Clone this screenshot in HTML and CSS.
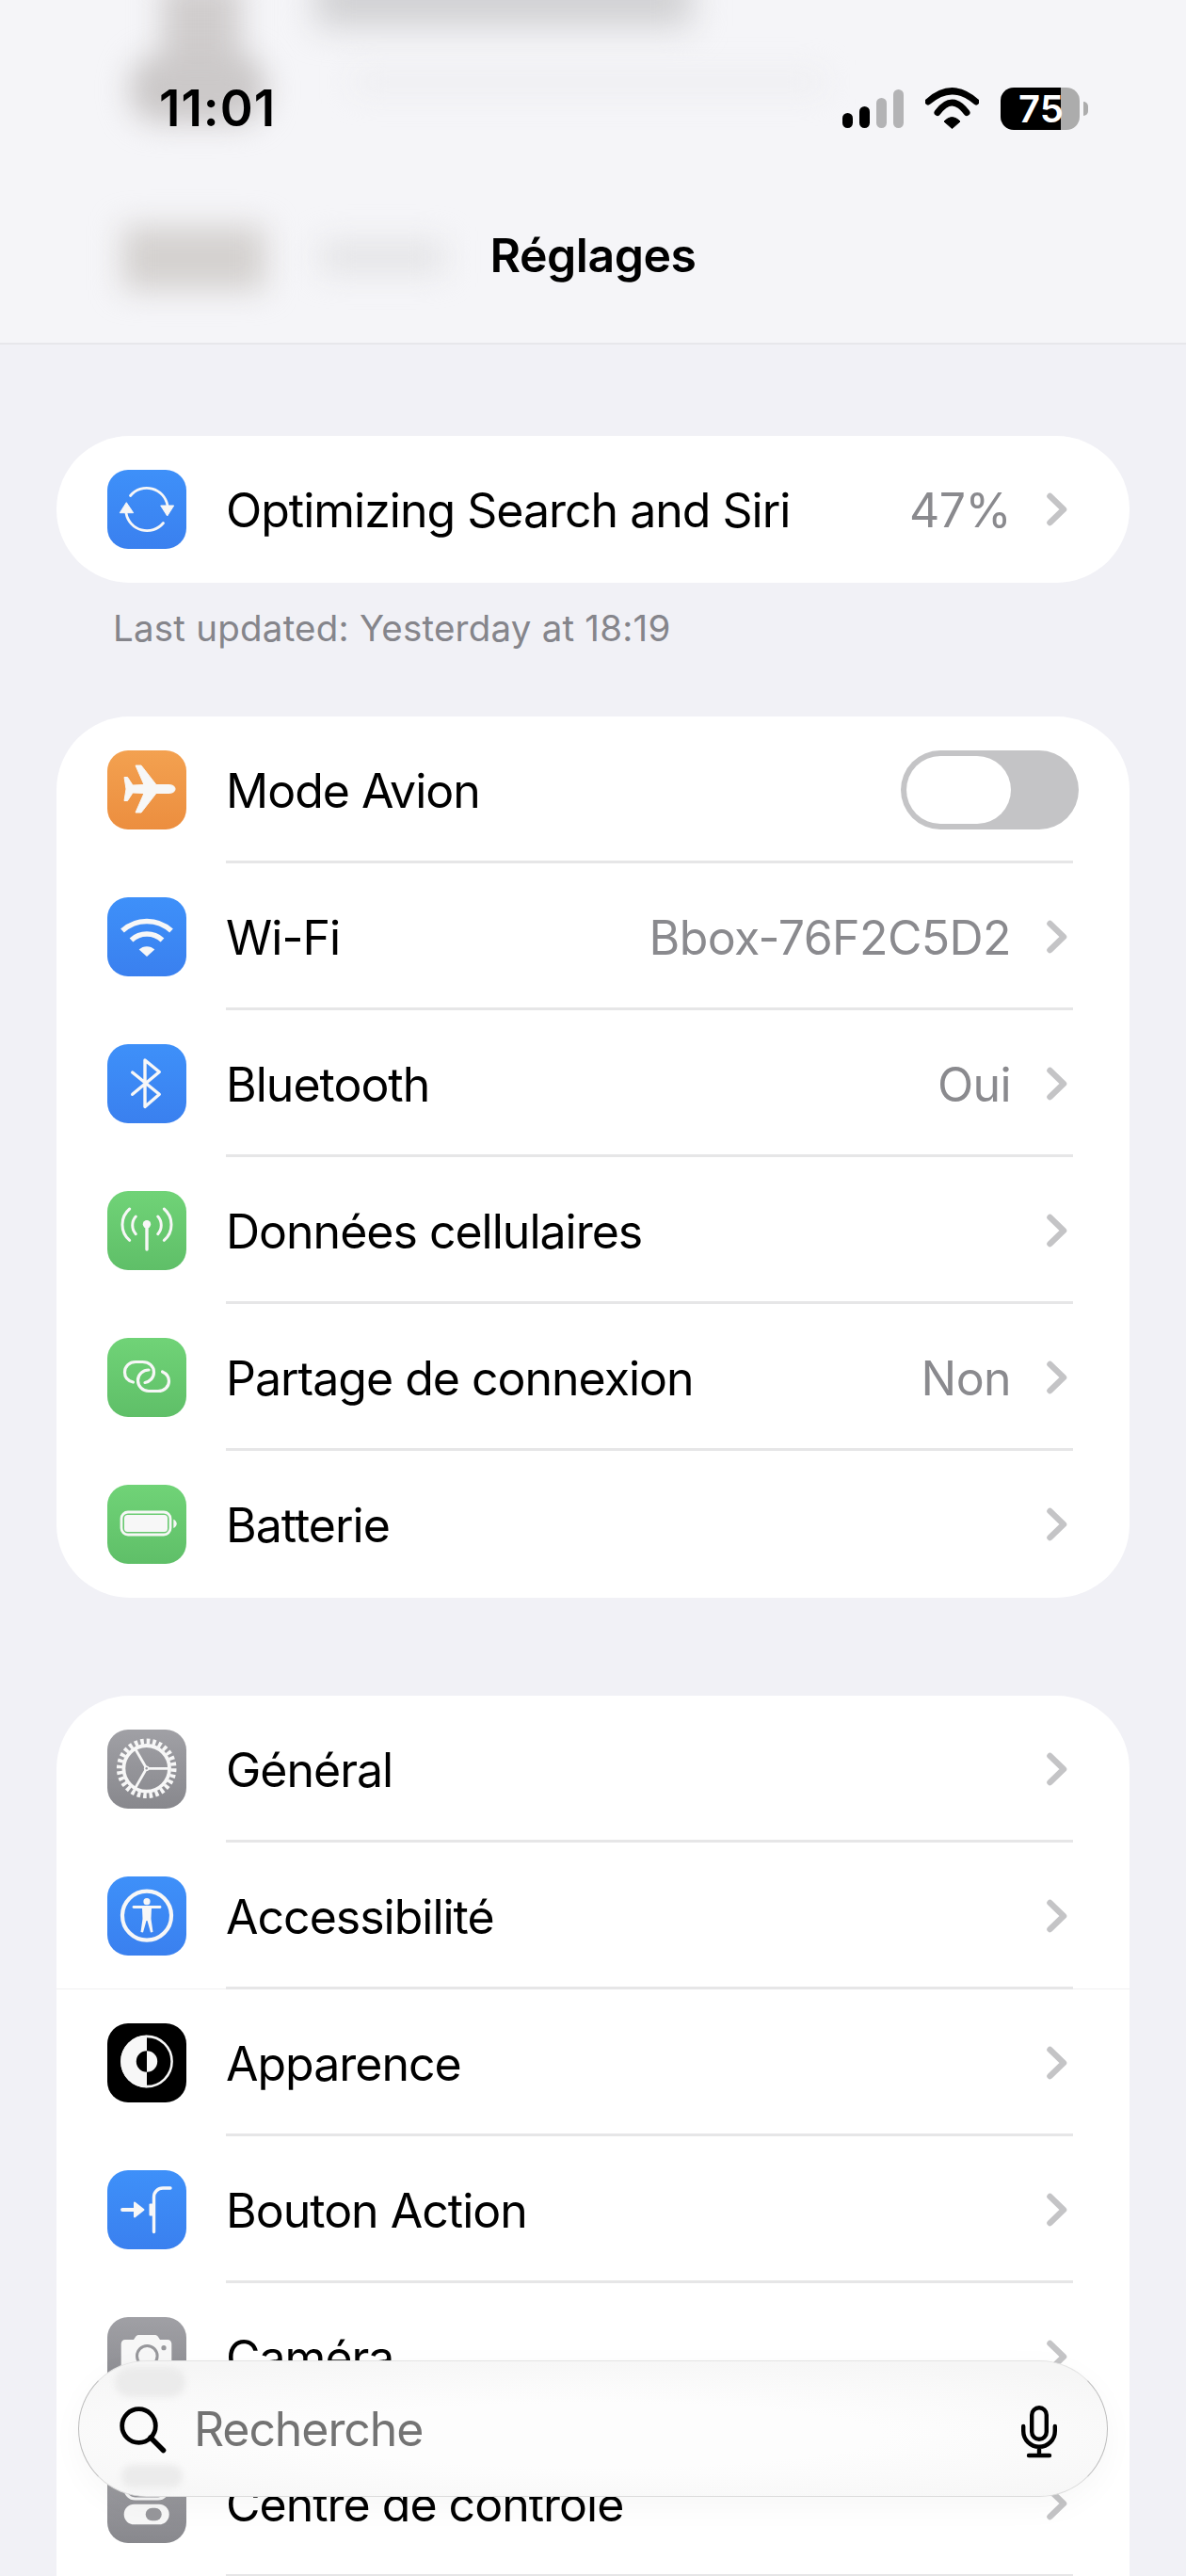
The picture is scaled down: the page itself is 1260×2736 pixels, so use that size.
FILE: index.html
```html
<!DOCTYPE html>
<html lang="fr">
<head>
<meta charset="utf-8">
<title>Réglages</title>
<link rel="stylesheet" href="styles.css">
</head>
<body>
<header class="header">
  <div class="smear smear-a"></div>
  <div class="smear smear-a2"></div>
  <div class="smear smear-b"></div>
  <div class="smear smear-c"></div>
  <div class="smear smear-d"></div>
  <div class="smear smear-e"></div>
  <div class="status">
    <span class="time">11:01</span>
    <div class="status-icons">
      <svg class="sig" width="65" height="41" viewBox="0 0 65 41">
        <rect x="0" y="25" width="11" height="16" rx="5.5" fill="#000"/>
        <rect x="18" y="18" width="11" height="23" rx="5.5" fill="#000"/>
        <rect x="36" y="9" width="11" height="32" rx="5.5" fill="#b3b3b5"/>
        <rect x="54" y="0" width="11" height="41" rx="5.5" fill="#b3b3b5"/>
      </svg>
      <svg class="wifi" width="57" height="44" viewBox="0 0 57 44">
        <path d="M3 15Q28.5-7.5 54 15M13 26.5Q28.500 5.500 44 26.500" fill="none" stroke="#000" stroke-width="7" stroke-linecap="round"/>
        <path d="M20 36Q28.500 27 37 36L28.500 43.500Z" fill="#000" stroke="#000" stroke-linejoin="round"/>
      </svg>
      <div class="battery"><span>75</span></div>
    </div>
  </div>
  <h1 class="title">Réglages</h1>
</header>

<main class="list">
  <section class="card">
    <div class="row">
      <span class="icon blue">
        <svg viewBox="0 0 84 84"><path d="M24.500 27.500A22.500 22.500 0 0 1 64 38M20 46A22.500 22.500 0 0 0 59.500 56.500" fill="none" stroke="#f7f7f7" stroke-width="2.800" stroke-linecap="round"/><path d="M56.700 38H70.700L63.700 49ZM13.300 45.700H27.700L20.300 34.700Z" fill="#f7f7f7" stroke="#f7f7f7" stroke-linejoin="round"/></svg>
      </span>
      <div class="body last">
        <span class="label">Optimizing Search and Siri</span>
        <span class="value">47%</span>
        <svg class="chev" viewBox="0 0 24 40"><path d="M4.500 6L19 20L4.500 34" /></svg>
      </div>
    </div>
  </section>
  <p class="note">Last updated: Yesterday at 18:19</p>

  <section class="card">
    <div class="row">
      <span class="icon orange">
        <svg viewBox="0 0 84 84"><path d="M72 41c0-3-3-4.500-7-4.500L52 36.500 36 16H30L39 36.500 27 37 21.500 28.500H18L20 41 18 53.500H21.500L27 45 39 45.500 30 66H36L52 45.500 65 45.500C69 45.500 72 44 72 41Z" fill="#f7f7f7" stroke="#f7f7f7" stroke-linejoin="round"/></svg>
      </span>
      <div class="body">
        <span class="label">Mode Avion</span>
        <span class="toggle"><span class="knob"></span></span>
      </div>
    </div>
    <div class="row">
      <span class="icon blue">
        <svg viewBox="0 0 84 84"><path d="M16 35.500A38.500 38.500 0 0 1 68 35.500M25.500 45.500A24.500 24.500 0 0 1 58.500 45.500" fill="none" stroke="#f7f7f7" stroke-width="5.500"/><path d="M33.700 55.500A12 12 0 0 1 50.300 55.500L42 63Z" fill="#f7f7f7"/></svg>
      </span>
      <div class="body">
        <span class="label">Wi-Fi</span>
        <span class="value">Bbox-76F2C5D2</span>
        <svg class="chev" viewBox="0 0 24 40"><path d="M4.500 6L19 20L4.500 34" /></svg>
      </div>
    </div>
    <div class="row">
      <span class="icon blue">
        <svg viewBox="0 0 84 84"><path d="M26.700 30L55.300 53.300 40 66.500V17L55.300 29.500 26.700 53.300" fill="none" stroke="#f7f7f7" stroke-width="3.400" stroke-linecap="round" stroke-linejoin="round"/></svg>
      </span>
      <div class="body">
        <span class="label">Bluetooth</span>
        <span class="value">Oui</span>
        <svg class="chev" viewBox="0 0 24 40"><path d="M4.500 6L19 20L4.500 34" /></svg>
      </div>
    </div>
    <div class="row">
      <span class="icon green">
        <svg viewBox="0 0 84 84"><g fill="none" stroke="#f7f7f7" stroke-linecap="round"><path d="M30.300 27A14 14 0 0 0 30.300 45.700M53.700 27A14 14 0 0 1 53.700 45.700M23.700 19A21.800 21.800 0 0 0 23.700 52.300M60.300 19A21.800 21.800 0 0 1 60.300 52.300" stroke-width="3"/><path d="M42 36V62" stroke-width="3.400"/></g><circle cx="42" cy="35.300" r="4.200" fill="#f7f7f7"/></svg>
      </span>
      <div class="body">
        <span class="label">Données cellulaires</span>
        <svg class="chev" viewBox="0 0 24 40"><path d="M4.500 6L19 20L4.500 34" /></svg>
      </div>
    </div>
    <div class="row">
      <span class="icon green">
        <svg viewBox="0 0 84 84"><g fill="none" stroke="#f7f7f7" stroke-width="3.200" stroke-linecap="round"><path d="M27.500 47C21 45.500 18.500 41 18.500 36.500 18.500 30 23.500 25.500 30 25.500H37.500C44.500 25.500 49.500 30 49.500 36.500 49.500 42.500 45 46.500 40 47.500"/><path d="M44 34C38 34 32.500 38.500 32.500 45 32.500 51.500 37.500 56.500 44 56.500H54C60.500 56.500 65.500 52 65.500 46 65.500 41.500 63 38 58.500 36"/></g></svg>
      </span>
      <div class="body">
        <span class="label">Partage de connexion</span>
        <span class="value">Non</span>
        <svg class="chev" viewBox="0 0 24 40"><path d="M4.500 6L19 20L4.500 34" /></svg>
      </div>
    </div>
    <div class="row">
      <span class="icon green">
        <svg viewBox="0 0 84 84"><rect x="15" y="29" width="52" height="24" rx="7" fill="none" stroke="#f7f7f7" stroke-width="2.800"/><rect x="18" y="32" width="46" height="18" rx="3.500" fill="#f7f7f7"/><path d="M70.300 36.700C72.500 37.500 73.700 39.500 73.700 41.300 73.700 43.200 72.500 45.200 70.300 46Z" fill="#f7f7f7"/></svg>
      </span>
      <div class="body last">
        <span class="label">Batterie</span>
        <svg class="chev" viewBox="0 0 24 40"><path d="M4.500 6L19 20L4.500 34" /></svg>
      </div>
    </div>
  </section>

  <section class="card card-gap card-open">
    <div class="row">
      <span class="icon grey">
        <svg viewBox="0 0 84 84"><circle cx="41.700" cy="41.300" r="28.800" fill="none" stroke="#f7f7f7" stroke-width="6" pathLength="56" stroke-dasharray="1.100 0.900"/><circle cx="41.700" cy="41.300" r="24.300" fill="none" stroke="#f7f7f7" stroke-width="3.800"/><path d="M41.700 41.300H66M41.700 41.300L29.700 20.500M41.700 41.300L29.700 62.100" stroke="#f7f7f7" stroke-width="2.800"/><circle cx="41.700" cy="41.300" r="2.800" fill="#f7f7f7"/><circle cx="41.700" cy="41.300" r="1.200" fill="#97979b"/></svg>
      </span>
      <div class="body">
        <span class="label">Général</span>
        <svg class="chev" viewBox="0 0 24 40"><path d="M4.500 6L19 20L4.500 34" /></svg>
      </div>
    </div>
    <div class="row seam">
      <span class="icon blue">
        <svg viewBox="0 0 84 84"><circle cx="42" cy="41.700" r="26" fill="none" stroke="#f7f7f7" stroke-width="4.200"/><circle cx="42" cy="26.700" r="3.600" fill="#f7f7f7"/><path d="M28 32.500H56" stroke="#f7f7f7" stroke-width="2.800" stroke-linecap="round"/><path d="M37 33.500H47L46.500 45 48.500 59 46 59.500 42.500 47H41.500L38 59.500 35.500 59 37.500 45Z" fill="#f7f7f7"/></svg>
      </span>
      <div class="body">
        <span class="label">Accessibilité</span>
        <svg class="chev" viewBox="0 0 24 40"><path d="M4.500 6L19 20L4.500 34" /></svg>
      </div>
    </div>
    <div class="row">
      <span class="icon black">
        <svg viewBox="0 0 84 84"><circle cx="42" cy="40.500" r="26.600" fill="#000" stroke="#f7f7f7" stroke-width="2.600"/><path d="M42 12.700A27.800 27.800 0 0 0 42 68.300Z" fill="#f7f7f7"/><path d="M42 29.300A11.200 11.200 0 0 0 42 51.700Z" fill="#000"/><path d="M42 29.300A11.200 11.200 0 0 1 42 51.700Z" fill="#f7f7f7"/></svg>
      </span>
      <div class="body">
        <span class="label">Apparence</span>
        <svg class="chev" viewBox="0 0 24 40"><path d="M4.500 6L19 20L4.500 34" /></svg>
      </div>
    </div>
    <div class="row">
      <span class="icon blue">
        <svg viewBox="0 0 84 84"><path d="M49.500 65.500V28.500A9.500 9.500 0 0 1 59 19H67" fill="none" stroke="#f7f7f7" stroke-width="3.400" stroke-linecap="round"/><path d="M16 42H30" stroke="#f7f7f7" stroke-width="3.800" stroke-linecap="round"/><path d="M29 34.500L38.500 42 29 49.500Z" fill="#f7f7f7" stroke="#f7f7f7" stroke-width="2" stroke-linejoin="round"/><rect x="44.500" y="35.500" width="5" height="13" rx="1" fill="#f7f7f7"/></svg>
      </span>
      <div class="body">
        <span class="label">Bouton Action</span>
        <svg class="chev" viewBox="0 0 24 40"><path d="M4.500 6L19 20L4.500 34" /></svg>
      </div>
    </div>
    <div class="row">
      <span class="icon grey">
        <svg viewBox="0 0 84 84"><path d="M19 24H28L30 21C31 19.500 32 19 34 19H50C52 19 53 19.500 54 21L56 24H64C66.500 24 68.300 26 68.300 28.500V58C68.300 60.500 66.500 62.500 64 62.500H19C16.500 62.500 14.700 60.500 14.700 58V28.500C14.700 26 16.500 24 19 24Z" fill="#f7f7f7"/><circle cx="42.300" cy="41.300" r="10.800" fill="#f7f7f7" stroke="#97979b" stroke-width="3"/><circle cx="60" cy="32.700" r="2.600" fill="#97979b"/></svg>
      </span>
      <div class="body">
        <span class="label">Caméra</span>
        <svg class="chev" viewBox="0 0 24 40"><path d="M4.500 6L19 20L4.500 34" /></svg>
      </div>
    </div>
    <div class="row">
      <span class="icon grey">
        <svg viewBox="0 0 84 84"><rect x="19" y="16" width="45.500" height="21" rx="10.500" fill="none" stroke="#f7f7f7" stroke-width="3"/><rect x="24" y="20.500" width="23" height="12" rx="6" fill="#dcdcdf"/><rect x="17.700" y="42.700" width="48" height="21.600" rx="10.800" fill="#f7f7f7"/><rect x="40.700" y="46.700" width="17" height="13.600" rx="6.800" fill="#97979b"/></svg>
      </span>
      <div class="body">
        <span class="label">Centre de contrôle</span>
        <svg class="chev" viewBox="0 0 24 40"><path d="M4.500 6L19 20L4.500 34" /></svg>
      </div>
    </div>
  </section>
</main>

<div class="search">
  <span class="blob blob-top"></span>
  <span class="blob blob-bottom"></span>
  <svg class="search-glass" width="50" height="50" viewBox="0 0 50 50"><circle cx="20.500" cy="20.500" r="17.800" fill="none" stroke="#000" stroke-width="4.800"/><path d="M33 33L46.500 46.500" stroke="#000" stroke-width="5.500" stroke-linecap="round"/></svg>
  <span class="search-text">Recherche</span>
  <svg class="search-mic" width="40" height="56" viewBox="0 0 40 56"><rect x="12.200" y="2.200" width="15.600" height="33.600" rx="7.800" fill="none" stroke="#000" stroke-width="4.400"/><path d="M3.200 22V27A16.800 16.800 0 0 0 36.800 27V22M20 44V53M9 53H31" fill="none" stroke="#000" stroke-width="4.400" stroke-linecap="round"/></svg>
</div>
</body>
</html>
```
FILE: styles.css
```css
* { box-sizing: border-box; }

html, body {
  margin: 0;
  height: 2736px;
  overflow: hidden;
}

body {
  position: relative;
  background: #f1f1f6;
  color: #000;
  font-family: Inter, "Noto Sans", "Liberation Sans", sans-serif;
}

/* Header */
.header {
  position: relative;
  height: 366px;
  overflow: hidden;
  background: #f5f5f8;
  border-bottom: 2px solid #e7e7eb;
}

.smear {
  position: absolute;
  filter: blur(16px);
}
.smear-a  { left: 172px; top: -20px; width: 84px;  height: 120px; background: #d0cdcd; }
.smear-a2 { left: 138px; top: 60px;  width: 144px; height: 70px;  background: #cbc8c8; border-radius: 30px; }
.smear-b  { left: 335px; top: -30px; width: 400px; height: 58px;  background: #d0d0d2; filter: blur(18px); }
.smear-c  { left: 375px; top: 78px;  width: 500px; height: 18px;  background: #ececef; }
.smear-d  { left: 130px; top: 240px; width: 152px; height: 68px;  background: #d4d1cf; }
.smear-e  { left: 340px; top: 256px; width: 132px; height: 34px;  background: #e4e4e6; }

.status {
  position: relative;
  display: flex;
  justify-content: space-between;
  align-items: center;
  height: 46px;
  margin-top: 92px;
  padding: 0 113px 0 169px;
}

.time {
  font-size: 53px;
  font-weight: 600;
  letter-spacing: 1px;
  line-height: 46px;
}

.status-icons {
  display: flex;
  align-items: center;
  gap: 23px;
}

.battery {
  position: relative;
  width: 84px;
  height: 45px;
  padding-left: 19px;
  border-radius: 14px;
  background: linear-gradient(to right, #000 76%, #acacac 76%);
  color: #fff;
  font-size: 40px;
  font-weight: 600;
  line-height: 45px;
}
.battery span { position: relative; }
.battery::after {
  content: "";
  position: absolute;
  left: 88px;
  top: 15px;
  width: 5px;
  height: 15px;
  border-radius: 0 6px 6px 0;
  background: #acacac;
}

.title {
  position: relative;
  margin: 0;
  padding-top: 103px;
  text-align: center;
  font-size: 50px;
  font-weight: 600;
  line-height: 60px;
  letter-spacing: -0.500px;
}

/* List */
.list {
  padding: 97px 60px 0;
}

.card {
  background: #fff;
  border-radius: 78px;
}
.card-gap { margin-top: 104px; }
.card-open { border-radius: 78px 78px 0 0; }

.row {
  display: flex;
  height: 156px;
  padding-left: 54px;
}
.seam { box-shadow: inset 0 -1px 0 #f0f0f2; }

.icon {
  flex: none;
  display: block;
  width: 84px;
  height: 84px;
  margin-top: 36px;
  border-radius: 22px;
}
.icon svg { display: block; width: 84px; height: 84px; }

.blue   { background: linear-gradient(#3e90f9, #3a80ef); }
.orange { background: linear-gradient(#f3a150, #ec8e3f); }
.green  { background: linear-gradient(#70d377, #5fbf68); }
.grey   { background: linear-gradient(#a0a0a5, #88888d); }
.black  { background: #000; }

.body {
  flex: 1;
  display: flex;
  align-items: center;
  margin: 0 60px 0 42px;
  padding-top: 3px;
  border-bottom: 3px solid #e6e6e7;
}
.body.last { border-bottom-color: transparent; }

.label {
  flex: 1;
  padding-top: 2px;
  font-size: 50px;
  letter-spacing: -1px;
  white-space: nowrap;
}

.value {
  padding-top: 2px;
  color: #8a8a8e;
  font-size: 50px;
  letter-spacing: -0.600px;
  white-space: nowrap;
}

.chev {
  flex: none;
  width: 24px;
  height: 40px;
  margin: 0 5px 0 37px;
}
.chev path {
  fill: none;
  stroke: #c4c4c6;
  stroke-width: 6.500;
  stroke-linecap: round;
  stroke-linejoin: round;
}

.toggle {
  flex: none;
  display: block;
  width: 189px;
  height: 84px;
  margin-right: -6px;
  padding: 6px;
  border-radius: 42px;
  background: #c4c4c6;
}
.knob {
  display: block;
  width: 111px;
  height: 72px;
  border-radius: 36px;
  background: #fff;
}

.note {
  margin: 29px 0 74px;
  padding-left: 60px;
  height: 39px;
  color: #85858b;
  font-size: 38.500px;
  line-height: 38px;
  letter-spacing: 0.220px;
}

/* Search bar */
.search {
  position: absolute;
  left: 83px;
  top: 2507px;
  width: 1094px;
  height: 145px;
  display: flex;
  align-items: center;
  padding: 0 52px 0 43px;
  border: 1.500px solid;
  border-color: #e3e3e3 #bdbdbd #dcdcdc #bdbdbd;
  border-radius: 73px;
  background: radial-gradient(ellipse 70% 60% at 50% 55%, #fdfdfd 40%, #f6f6f6 100%);
  box-shadow: 0 10px 34px rgba(0, 0, 0, 0.035);
}

.blob {
  position: absolute;
  border-radius: 24px;
  background: #ebebeb;
  filter: blur(3px);
}
.blob-top    { left: 38px; top: 6px;   width: 75px; height: 32px; }
.blob-bottom { left: 45px; top: 110px; width: 65px; height: 24px; }

.search-glass, .search-mic { position: relative; flex: none; }
.search-glass { margin-top: 2px; }
.search-mic { margin-top: 6px; }

.search-text {
  position: relative;
  flex: 1;
  margin-left: 29px;
  color: #737373;
  font-size: 50px;
  letter-spacing: -1.100px;
}
```
